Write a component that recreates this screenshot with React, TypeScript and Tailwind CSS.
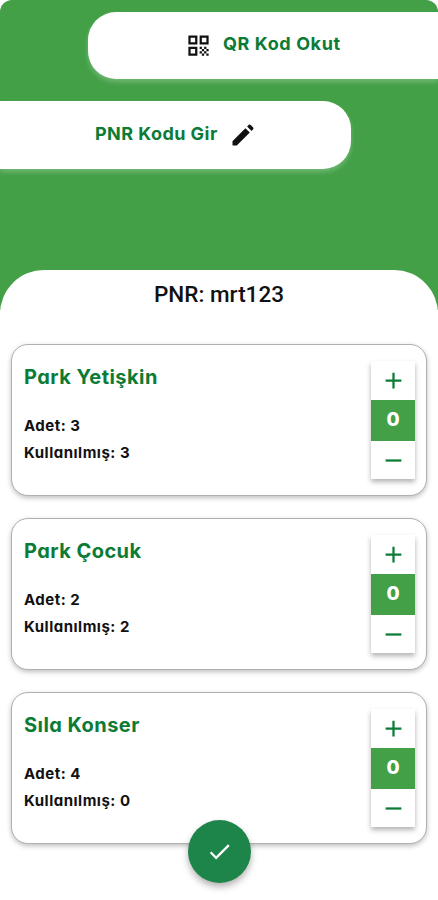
import React from "react";
import { MdAdd, MdCheck, MdQrCode, MdRemove } from "react-icons/md";

type Bilet = {
    naam: string;
    adet: number;
    kullanilmis: number;
};

const biletler: Array<Bilet> = [
    { naam: "Park Yetişkin", adet: 3, kullanilmis: 3 },
    { naam: "Park Çocuk", adet: 2, kullanilmis: 2 },
    { naam: "Sıla Konser", adet: 4, kullanilmis: 0 },
];

const Kalem: React.FC = () => {
    return (
        <svg viewBox="0 0 24 24" fill="currentColor" className="ml-[11px] h-[28px] w-[28px] text-[#111]">
            <path d="M3 17.46v3.04c0 .28.22.5.5.5h3.04c.13 0 .26-.05.35-.15L17.81 9.94l-3.75-3.75L3.15 17.1c-.1.1-.15.22-.15.36zM20.71 7.04a.996.996 0 0 0 0-1.41l-2.34-2.34a.996.996 0 0 0-1.41 0l-1.43 1.43 3.75 3.75 1.43-1.43z" />
        </svg>
    );
};

const Sayac: React.FC = () => {
    return (
        <div className="mt-[16px] mr-[11px] flex h-[118px] w-[44px] flex-col bg-white text-[#0b7b35] shadow-[0_3px_5px_rgba(0,0,0,0.3)]">
            <button className="flex h-[39px] items-center justify-center">
                <MdAdd size={27} />
            </button>
            <div className="flex h-[41px] items-center justify-center bg-[#43a047] pb-[2px] text-[19px] leading-[24px] font-extrabold text-white">
                0
            </div>
            <button className="flex flex-1 items-center justify-center">
                <MdRemove size={27} />
            </button>
        </div>
    );
};

const BiletKarti: React.FC<{ bilet: Bilet }> = ({ bilet }) => {
    return (
        <div className="flex h-[152px] justify-between rounded-[17px] border border-[#b0b0b0] bg-white shadow-[0_2px_5px_rgba(0,0,0,0.25)]">
            <div className="pt-[17px] pl-[12px]">
                <h2 className="text-[20px] leading-[30px] font-bold tracking-[0.45px] whitespace-nowrap text-[#0b7b35]">
                    {bilet.naam}
                </h2>
                <div className="mt-[20px] text-[15px] leading-[27px] font-bold tracking-[0.5px] whitespace-nowrap text-[#111]">
                    <p>Adet: {bilet.adet}</p>
                    <p>Kullanılmış: {bilet.kullanilmis}</p>
                </div>
            </div>
            <Sayac />
        </div>
    );
};

const App: React.FC = () => {
    return (
        <div className="h-[900px] w-[438px] overflow-hidden bg-white font-['Inter',sans-serif] [font-feature-settings:'cv11']">
            <div className="h-[310px] rounded-t-[12px] bg-[#43a047] pt-[12px]">
                <button className="ml-[88px] flex h-[67px] w-[350px] items-center rounded-l-[28px] bg-white pl-[97px] shadow-[0_3px_5px_rgba(255,255,255,0.25)]">
                    <MdQrCode size={27} className="text-[#111]" />
                    <span className="ml-[11px] pb-[3px] text-[18px] leading-[24px] font-bold tracking-[0.6px] text-[#0b7b35]">
                        QR Kod Okut
                    </span>
                </button>
                <button className="mt-[22px] flex h-[68px] w-[351px] items-center rounded-r-[28px] bg-white pl-[95px] shadow-[0_3px_5px_rgba(255,255,255,0.25)]">
                    <span className="pb-[2px] text-[18px] leading-[24px] font-bold tracking-[0.45px] text-[#0b7b35]">
                        PNR Kodu Gir
                    </span>
                    <Kalem />
                </button>
            </div>
            <div className="-mt-[40px] h-[630px] rounded-t-[44px] bg-white px-[11px] pt-[8px]">
                <h1 className="text-center font-['Roboto',sans-serif] text-[22.5px] leading-[32px] font-medium text-[#111]">
                    PNR: mrt123
                </h1>
                <div className="mt-[34px] flex flex-col gap-[22px]">
                    {biletler.map(bilet => (
                        <BiletKarti key={bilet.naam} bilet={bilet} />
                    ))}
                </div>
                <div className="relative -mt-[24px] flex justify-center">
                    <button className="flex h-[63px] w-[63px] items-center justify-center rounded-full bg-[#1e854a] text-white shadow-[0_4px_7px_rgba(0,0,0,0.3)]">
                        <MdCheck size={27} />
                    </button>
                </div>
            </div>
        </div>
    );
};

export default App;
